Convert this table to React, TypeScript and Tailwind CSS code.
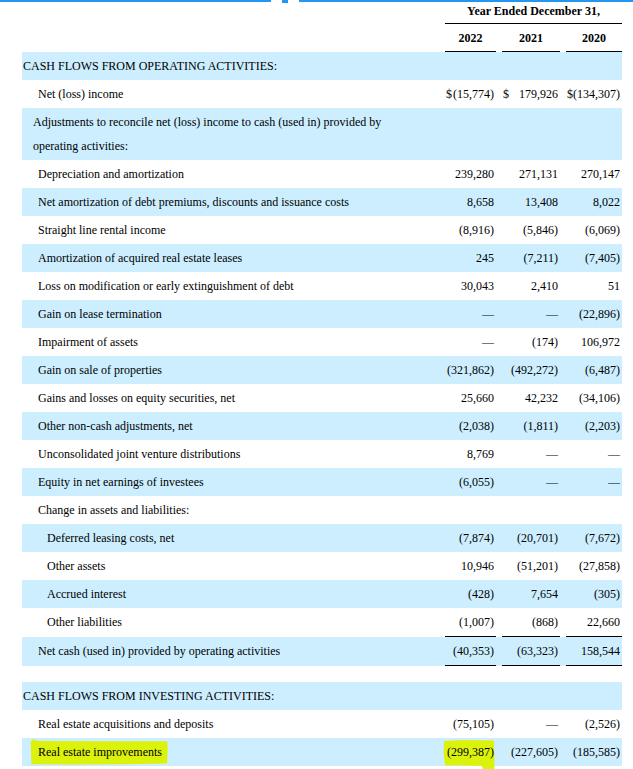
type Line = {
    label: string;
    pad: string;
    vals?: string[];
    blue?: boolean;
    dollar?: boolean;
    rule?: boolean;
};

const operating: Line[] = [
    { label: "CASH FLOWS FROM OPERATING ACTIVITIES:", pad: "pl-[1px]", blue: true },
    { label: "Net (loss) income", pad: "pl-[16px]", vals: ["(15,774)", "179,926", "(134,307)"], dollar: true },
];

const adjustments: Line[] = [
    { label: "Depreciation and amortization", pad: "pl-[16px]", vals: ["239,280", "271,131", "270,147"] },
    { label: "Net amortization of debt premiums, discounts and issuance costs", pad: "pl-[16px]", vals: ["8,658", "13,408", "8,022"], blue: true },
    { label: "Straight line rental income", pad: "pl-[16px]", vals: ["(8,916)", "(5,846)", "(6,069)"] },
    { label: "Amortization of acquired real estate leases", pad: "pl-[16px]", vals: ["245", "(7,211)", "(7,405)"], blue: true },
    { label: "Loss on modification or early extinguishment of debt", pad: "pl-[16px]", vals: ["30,043", "2,410", "51"] },
    { label: "Gain on lease termination", pad: "pl-[16px]", vals: ["—", "—", "(22,896)"], blue: true },
    { label: "Impairment of assets", pad: "pl-[16px]", vals: ["—", "(174)", "106,972"] },
    { label: "Gain on sale of properties", pad: "pl-[16px]", vals: ["(321,862)", "(492,272)", "(6,487)"], blue: true },
    { label: "Gains and losses on equity securities, net", pad: "pl-[16px]", vals: ["25,660", "42,232", "(34,106)"] },
    { label: "Other non-cash adjustments, net", pad: "pl-[16px]", vals: ["(2,038)", "(1,811)", "(2,203)"], blue: true },
    { label: "Unconsolidated joint venture distributions", pad: "pl-[16px]", vals: ["8,769", "—", "—"] },
    { label: "Equity in net earnings of investees", pad: "pl-[16px]", vals: ["(6,055)", "—", "—"], blue: true },
    { label: "Change in assets and liabilities:", pad: "pl-[16px]" },
    { label: "Deferred leasing costs, net", pad: "pl-[25px]", vals: ["(7,874)", "(20,701)", "(7,672)"], blue: true },
    { label: "Other assets", pad: "pl-[25px]", vals: ["10,946", "(51,201)", "(27,858)"] },
    { label: "Accrued interest", pad: "pl-[25px]", vals: ["(428)", "7,654", "(305)"], blue: true },
    { label: "Other liabilities", pad: "pl-[25px]", vals: ["(1,007)", "(868)", "22,660"], rule: true },
    { label: "Net cash (used in) provided by operating activities", pad: "pl-[16px]", vals: ["(40,353)", "(63,323)", "158,544"], blue: true, rule: true },
];

const investing: Line[] = [
    { label: "CASH FLOWS FROM INVESTING ACTIVITIES:", pad: "pl-[1px]", blue: true },
    { label: "Real estate acquisitions and deposits", pad: "pl-[16px]", vals: ["(75,105)", "—", "(2,526)"] },
];

const grid = "grid grid-cols-[1fr_51px_58px_56px] gap-x-[6px]";

function Row({ line }: { line: Line }) {
    return (
        <div className={`${grid} ${line.blue ? "bg-[#cceeff]" : ""}`}>
            <div className={`${line.pad} py-[2px] whitespace-nowrap`}>{line.label}</div>
            {(line.vals ?? ["", "", ""]).map((v, i) => (
                <div
                    key={i}
                    className={`flex justify-between py-[2px] pr-[2px] ${line.rule ? "border-b border-black" : ""}`}
                >
                    <span className="pl-[1px]">{line.dollar ? "$" : ""}</span>
                    <span>{v}</span>
                </div>
            ))}
        </div>
    );
}

// highlighter strokes drawn behind the two marked cells
function Highlighted() {
    return (
        <div className={`${grid} bg-[#cceeff]`}>
            <div className="py-[2px] pl-[16px]">
                <span className="relative inline-block">
                    <div className="absolute -left-[8px] -right-[6px] -top-[1px] h-[26px]">
                        <svg className="h-full w-full" viewBox="0 0 100 26" preserveAspectRatio="none">
                            <path
                                d="M0.5 2.5 L2.5 0.3 L6 2 L50 2.3 L99.5 2.2 L99.8 10 L99.4 24.6 L70 25.2 L30 25.6 L1 25.2 L0.8 15 Z"
                                fill="#dbf20c"
                            />
                        </svg>
                    </div>
                    <span className="relative">Real estate improvements</span>
                </span>
            </div>
            <div className="flex justify-end py-[2px] pr-[2px]">
                <span className="relative inline-block">
                    <div className="absolute -left-[4px] -right-[1px] -top-[2px] h-[31px]">
                        <svg className="h-full w-full" viewBox="0 0 52 31" preserveAspectRatio="none">
                            <path
                                d="M1 3 L20 2 L51 2.5 L51.5 31 L40 31 L39 28 L20 27.5 L2 27.5 L0.5 15 Z"
                                fill="#dbf20c"
                            />
                        </svg>
                    </div>
                    <span className="relative">(299,387)</span>
                </span>
            </div>
            <div className="flex justify-end py-[2px] pr-[2px]">(227,605)</div>
            <div className="flex justify-end py-[2px] pr-[2px]">(185,585)</div>
        </div>
    );
}

export default function App() {
    return (
        <div className="h-[769px] w-[633px] overflow-hidden bg-white font-['Liberation_Serif',serif] text-[12px] leading-[24px] text-black">
            <div className="flex h-[2px] items-start">
                <div className="h-[2px] w-[271px] bg-[#2196f3]" />
                <div className="ml-[11px] h-[3px] w-[6px] bg-[#2196f3]" />
                <div className="ml-[11px] h-[2px] flex-1 bg-[#2196f3]" />
            </div>

            <div className="ml-[22px] w-[600px]">
                <div className={grid}>
                    <div />
                    <div className="col-span-3 h-[22px] border-b border-black text-center font-bold leading-[18px]">
                        Year Ended December 31,
                    </div>
                </div>
                <div className={grid}>
                    <div />
                    {["2022", "2021", "2020"].map((y) => (
                        <div key={y} className="h-[28px] border-b border-black text-center font-bold leading-[29px]">
                            {y}
                        </div>
                    ))}
                </div>

                {operating.map((l) => (
                    <Row key={l.label} line={l} />
                ))}

                <div className={`${grid} bg-[#cceeff]`}>
                    <div className="py-[2px] pl-[11px]">
                        Adjustments to reconcile net (loss) income to cash (used in) provided by
                        <br />
                        operating activities:
                    </div>
                </div>

                {adjustments.map((l) => (
                    <Row key={l.label} line={l} />
                ))}

                <div className="h-[16px]" />

                {investing.map((l) => (
                    <Row key={l.label} line={l} />
                ))}
                <Highlighted />
            </div>
        </div>
    );
}
